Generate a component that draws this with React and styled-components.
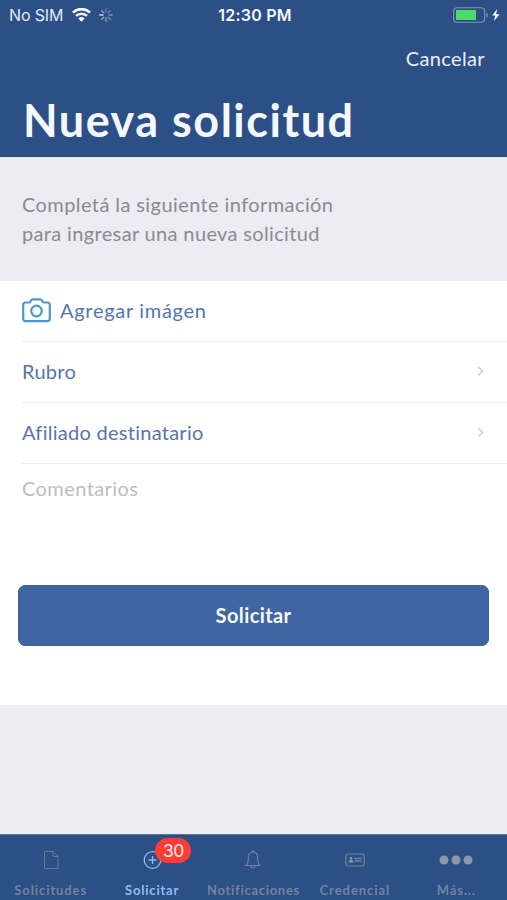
import React from "react";
import styled, { createGlobalStyle } from "styled-components";

const GlobalStyle = createGlobalStyle`
  * { box-sizing: border-box; }
  body { margin: 0; background: #edebf4; }
`;

const Screen = styled.div`
  width: 507px;
  height: 900px;
  display: flex;
  flex-direction: column;
  overflow: hidden;
  background: #edebf4;
  font-family: Lato, "Open Sans", sans-serif;
  white-space: nowrap;
`;

const Header = styled.header`
  height: 157px;
  flex: none;
  background: #2c4f85;
  color: #f5f8ff;
  border-bottom: 1px solid #264679;
`;

const StatusBar = styled.div`
  height: 30px;
  padding: 0 7px 0 9px;
  display: grid;
  grid-template-columns: 1fr auto 1fr;
  align-items: center;
  font-family: Inter, sans-serif;
  font-size: 16px;
  line-height: 30px;
`;

const StatusGroup = styled.div`
  display: flex;
  align-items: center;
  justify-content: ${(p) => (p.$end ? "flex-end" : "flex-start")};
`;

const Carrier = styled.span`
  width: 54px;
  margin-right: 9px;
  letter-spacing: -0.15px;
  color: #e3ebf8;
`;

const Clock = styled.span`
  padding-left: 1px;
  font-weight: 600;
  letter-spacing: 0.2px;
`;

const StatusSpinner = styled.svg`
  margin-left: 8px;
`;

const NavBar = styled.div`
  height: 58px;
  padding: 0 22px 2px;
  display: flex;
  align-items: center;
  justify-content: flex-end;
`;

const CancelButton = styled.button`
  border: 0;
  padding: 0;
  background: none;
  color: #e9effa;
  font: 400 20px/28px Lato, sans-serif;
  letter-spacing: 0.35px;
`;

const Title = styled.h1`
  margin: 0;
  padding-left: 23px;
  font-size: 45px;
  line-height: 64px;
  font-weight: 700;
  letter-spacing: 1.5px;
`;

const Intro = styled.p`
  height: 124px;
  margin: 0;
  padding: 33px 22px 0;
  flex: none;
  color: #8b8a90;
  font-size: 20px;
  line-height: 28.5px;
`;

const IntroLine = styled.span`
  display: block;
  letter-spacing: ${(p) => p.$spacing}px;
`;

const Form = styled.main`
  height: 424px;
  flex: none;
  background: #fff;
`;

const Row = styled.div`
  height: 61px;
  margin-left: 22px;
  padding: 0 22px 2px 0;
  display: flex;
  align-items: center;
  border-bottom: 1px solid #ececee;
  color: #5675ae;
  font-size: 20px;
  line-height: 28px;
`;

const RowLabel = styled.span`
  flex: 1;
  letter-spacing: ${(p) => p.$spacing}px;
`;

const CameraIcon = styled.svg`
  margin-right: 9px;
  flex: none;
`;

const Comments = styled.div`
  height: 121px;
  padding: 10px 22px;
  color: #bdbdbf;
  font-size: 20px;
  line-height: 28px;
  letter-spacing: 0.42px;
`;

const SubmitButton = styled.button`
  display: block;
  width: 471px;
  height: 61px;
  margin: 0 18px;
  padding: 0 0 2px;
  border: 1px solid #3b629f;
  border-radius: 7px;
  background: #4065a3;
  color: #f8faff;
  font: 700 20px/28px Lato, sans-serif;
  letter-spacing: 0.4px;
`;

const TabBar = styled.nav`
  height: 66px;
  margin-top: auto;
  flex: none;
  display: grid;
  grid-template-columns: repeat(5, 1fr);
  border-top: 1px solid #5f7596;
  background: #2c4f85;
`;

const Tab = styled.div`
  position: relative;
  display: flex;
  flex-direction: column;
  align-items: center;
  color: ${(p) => (p.$active ? "#8fbdf6" : "#72839c")};
  font-size: 13px;
  line-height: 18px;
  font-weight: 700;
`;

const TabIcon = styled.span`
  height: 48px;
  padding-top: 1px;
  flex: none;
  display: flex;
  align-items: center;
`;

const TabLabel = styled.span`
  margin-top: -2px;
  letter-spacing: ${(p) => p.$spacing}px;
`;

const Badge = styled.span`
  position: absolute;
  top: 3px;
  left: 54px;
  width: 36px;
  height: 25px;
  border-radius: 13px;
  background: #fc3d35;
  color: #ffe9e8;
  font: 400 17.5px/25px Inter, sans-serif;
  letter-spacing: -0.5px;
  text-align: center;
`;

const Wifi = () => (
  <svg width="19" height="15" viewBox="0 0 19 15" fill="none" stroke="#f5f8ff">
    <path d="M1 4.600C5.800-.1 13.200-.1 18 4.600" strokeWidth="2.700" />
    <path d="M4 7.900c3.200-3 7.800-3 11 0" strokeWidth="2.500" />
    <path d="M6.300 10.400Q9.500 7.600 12.700 10.400L9.500 13.700Z" fill="#f5f8ff" stroke="none" />
  </svg>
);

const spokes = [0.35, 0.4, 0.45, 0.5, 0.55, 0.65, 0.9, 0.65];

const Spinner = () => (
  <StatusSpinner width="14" height="14" viewBox="-7 -7 14 14">
    {spokes.map((opacity, i) => (
      <path key={i} d="M0-3V-6.200" stroke="#dce7fa" strokeWidth="1.300" strokeLinecap="round" opacity={opacity} transform={`rotate(${i * 45})`} />
    ))}
  </StatusSpinner>
);

const Battery = () => (
  <svg width="48" height="17" viewBox="0 0 48 17">
    <rect x="1.700" y=".7" width="31" height="14.600" rx="3.500" fill="none" stroke="#8298bb" strokeWidth="1.100" />
    <rect x="4" y="3" width="20" height="10" rx=".8" fill="#4cdb64" />
    <path d="M34.500 5.500c1.800.6 1.800 4.400 0 5Z" fill="#8298bb" />
    <path d="M45.200 2 40.200 8.600h3.100l-1.500 5.700L47.600 7.200h-3.500Z" fill="#fff" />
  </svg>
);

const Camera = () => (
  <CameraIcon width="29" height="25" viewBox="0 0 29 25" fill="none" stroke="#4b98cc" strokeWidth="2.200">
    <path d="M3.500 4.500H7q1 0 1.500-1l.6-1.200q.5-1 1.600-1h7.600q1.100 0 1.600 1l.6 1.200q.5 1 1.500 1h3.500q2.300 0 2.300 2.300v14q0 2.300-2.300 2.300h-22q-2.300 0-2.300-2.300v-14q0-2.300 2.300-2.300Z" strokeLinejoin="round" />
    <circle cx="14.500" cy="13" r="5.300" />
  </CameraIcon>
);

const Chevron = () => (
  <svg width="8" height="12" viewBox="0 0 8 12" fill="none" stroke="#d3d3d6" strokeWidth="1.700">
    <path d="m1.300 2.200 4.200 4.100-4.200 4.100" />
  </svg>
);

const DocumentIcon = () => (
  <svg width="16" height="20" viewBox="0 0 16 20" fill="none" stroke="#647b9b">
    <path d="M1.500 1.500h8.500l5 5v12H1.500ZM10 1.500v5h5" />
  </svg>
);

const AddIcon = () => (
  <svg width="20" height="20" viewBox="0 0 20 20" fill="none" stroke="#8fbdf6" strokeWidth="1.300">
    <circle cx="10.500" cy="10" r="8.300" />
    <path d="M10.500 6v8M6.500 10h8" />
  </svg>
);

const BellIcon = () => (
  <svg width="18" height="20" viewBox="0 0 18 20" fill="none" stroke="#73859f" strokeWidth="1.100">
    <path d="M2 15.500c2-1.700 2.300-3 2.300-7.300C4.300 4.200 6 2 9 2s4.700 2.200 4.700 6.200c0 4.300.3 5.600 2.300 7.300ZM7 15.800c0 2.900 4 2.900 4 0M8 2c0-1.500 2-1.500 2 0" />
  </svg>
);

const CardIcon = () => (
  <svg width="20" height="14" viewBox="0 0 20 14" fill="none" stroke="#71849f">
    <rect x=".8" y="1" width="18.400" height="12" rx="2.200" strokeWidth="1.200" />
    <circle cx="6" cy="5.300" r="1.400" fill="#8797ad" stroke="none" />
    <path d="M3.500 9.500q.3-2.800 2.500-2.800t2.500 2.800Z" fill="#8797ad" stroke="none" />
    <path d="M9.500 5.500h7M9.500 8h7" strokeWidth="1.300" />
  </svg>
);

const MoreIcon = () => (
  <svg width="34" height="10" viewBox="0 0 34 10" fill="#8d98a9">
    <circle cx="5" cy="5" r="4.500" />
    <circle cx="17" cy="5" r="4.500" />
    <circle cx="29" cy="5" r="4.500" />
  </svg>
);

const tabs = [
  { label: "Solicitudes", Icon: DocumentIcon, spacing: 0.9 },
  { label: "Solicitar", Icon: AddIcon, spacing: 0.8, active: true, badge: 30 },
  { label: "Notificaciones", Icon: BellIcon, spacing: 0.7 },
  { label: "Credencial", Icon: CardIcon, spacing: 0.95 },
  { label: "Más...", Icon: MoreIcon, spacing: 0.9 },
];

export default function App() {
  return (
    <Screen>
      <GlobalStyle />
      <Header>
        <StatusBar>
          <StatusGroup>
            <Carrier>No SIM</Carrier>
            <Wifi />
            <Spinner />
          </StatusGroup>
          <Clock>12:30 PM</Clock>
          <StatusGroup $end>
            <Battery />
          </StatusGroup>
        </StatusBar>
        <NavBar>
          <CancelButton>Cancelar</CancelButton>
        </NavBar>
        <Title>Nueva solicitud</Title>
      </Header>
      <Intro>
        <IntroLine $spacing={0.41}>Completá la siguiente información</IntroLine>
        <IntroLine $spacing={0.35}>para ingresar una nueva solicitud</IntroLine>
      </Intro>
      <Form>
        <Row>
          <Camera />
          <RowLabel $spacing={0.7}>Agregar imágen</RowLabel>
        </Row>
        <Row>
          <RowLabel $spacing={0.3}>Rubro</RowLabel>
          <Chevron />
        </Row>
        <Row>
          <RowLabel $spacing={0.27}>Afiliado destinatario</RowLabel>
          <Chevron />
        </Row>
        <Comments>Comentarios</Comments>
        <SubmitButton>Solicitar</SubmitButton>
      </Form>
      <TabBar>
        {tabs.map(({ label, Icon, spacing, active, badge }) => (
          <Tab key={label} $active={active}>
            <TabIcon>
              <Icon />
            </TabIcon>
            {badge && <Badge>{badge}</Badge>}
            <TabLabel $spacing={spacing}>{label}</TabLabel>
          </Tab>
        ))}
      </TabBar>
    </Screen>
  );
}
